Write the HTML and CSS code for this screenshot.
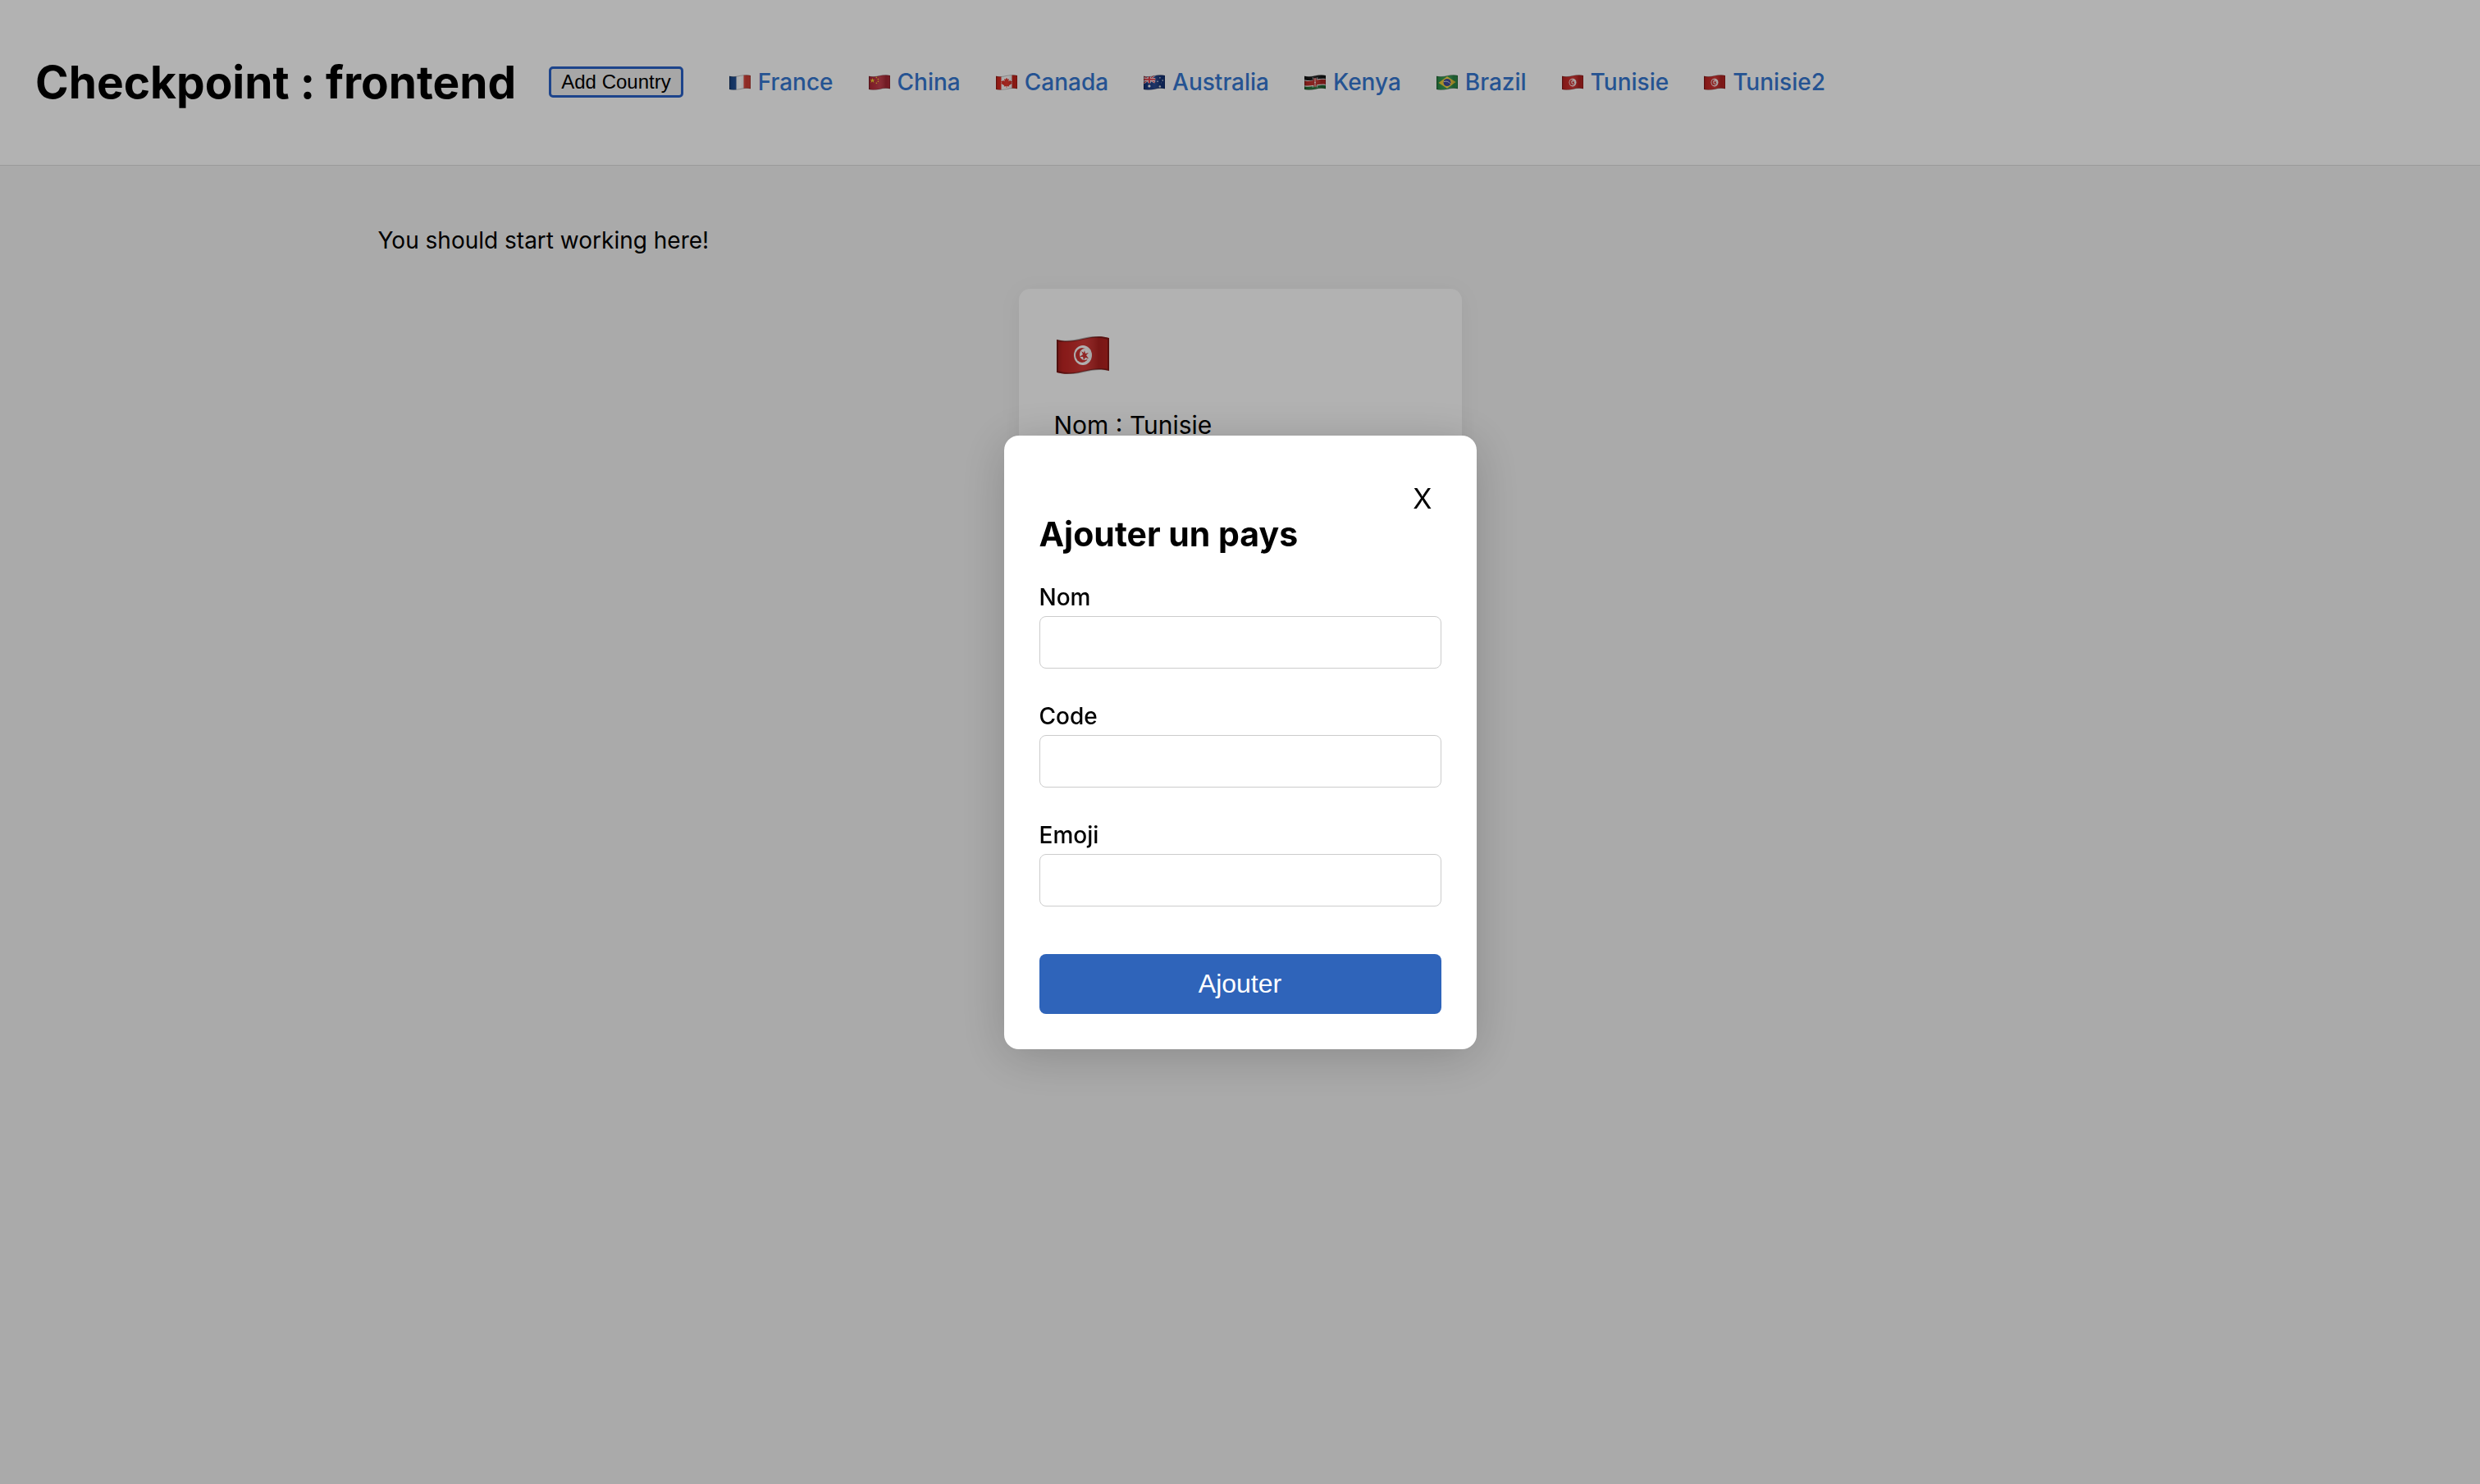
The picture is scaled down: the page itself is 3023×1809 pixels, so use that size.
FILE: index.html
```html
<!DOCTYPE html>
<html lang="fr">
<head>
<meta charset="utf-8">
<title>Checkpoint : frontend</title>
<link rel="stylesheet" href="styles.css">
</head>
<body>
<svg class="defs" aria-hidden="true">
  <defs>
    <clipPath id="wave"><path d="M0 4C10 7 20 6 32 3S54-1 64 2V42C54 39 44 40 32 43S10 47 0 44Z"/></clipPath>
    <linearGradient id="shade"><stop offset="0" stop-opacity=".22"/><stop offset=".12" stop-opacity=".06"/><stop offset=".5" stop-color="#fff" stop-opacity=".08"/><stop offset=".8" stop-opacity=".16"/><stop offset="1" stop-opacity=".1"/></linearGradient>
    <symbol id="cloth" viewBox="0 0 64 46"><path d="M0 4C10 7 20 6 32 3S54-1 64 2V42C54 39 44 40 32 43S10 47 0 44Z" fill="url(#shade)"/><path d="M1 5C10 7 20 6 32 3S54 0 63 3V41C54 39 44 40 32 43S10 46 1 43Z" fill="none" stroke="#000" stroke-opacity=".3" stroke-width="2"/></symbol>
    <symbol id="fr" viewBox="0 0 64 46"><g clip-path="url(#wave)"><path fill="#fff" d="M0 0h64v46H0z"/><path fill="#1f4f96" d="M0 0h21v46H0z"/><path fill="#ee4a40" d="M43 0h21v46H43z"/></g><use href="#cloth"/></symbol>
    <symbol id="cn" viewBox="0 0 64 46"><g clip-path="url(#wave)"><path fill="#c12f3e" d="M0 0h64v46H0z"/><path fill="#ffe030" d="m11 10 2 5h5l-4 3 2 6-5-4-5 4 2-6-4-3h5z"/><g fill="#ffd030"><circle cx="23" cy="8" r="2"/><circle cx="28" cy="13" r="2"/><circle cx="28" cy="20" r="2"/><circle cx="23" cy="25" r="2"/></g></g><use href="#cloth"/></symbol>
    <symbol id="ca" viewBox="0 0 64 46"><g clip-path="url(#wave)"><path fill="#fff" d="M0 0h64v46H0z"/><path fill="#e32a20" d="M0 0h16v46H0zM48 0h16v46H48zM32 8l3 6 4-2-1 8 5-4 1 3 4 0-2 5 2 2-9 6 1 3-7-1v5h-2v-5l-7 1 1-3-9-6 2-2-2-5 4 0 1-3 5 4-1-8 4 2z"/></g><use href="#cloth"/></symbol>
    <symbol id="au" viewBox="0 0 64 46"><g clip-path="url(#wave)"><path fill="#183b88" d="M0 0h64v46H0z"/><path stroke="#fff" stroke-width="6" d="M0 4l34 19M34 1 0 25"/><path stroke="#e63946" stroke-width="3" d="M0 4l34 19M34 1 0 25"/><path stroke="#fff" stroke-width="9" d="M17 0v25M0 14h35"/><path stroke="#e63946" stroke-width="5" d="M17 0v25M0 14h35"/><g fill="#fff"><circle cx="17" cy="34" r="4"/><circle cx="49" cy="9" r="2"/><circle cx="49" cy="35" r="3"/><circle cx="42" cy="20" r="2"/><circle cx="57" cy="17" r="2"/><circle cx="53" cy="24" r="1"/></g></g><use href="#cloth"/></symbol>
    <symbol id="ke" viewBox="0 0 64 46"><g clip-path="url(#wave)"><path fill="#fff" d="M0 0h64v46H0z"/><path fill="#151515" d="M0 0h64v12C48 9 36 14 24 16S6 17 0 15z"/><path fill="#c52d28" d="M0 18c8 2 18 1 28-1s24-4 36-3v15c-12-3-22 0-34 2S8 33 0 32z"/><path fill="#247337" d="M0 35c8 2 18 1 28-1s24-5 36-2v14H0z"/><path stroke="#fff" stroke-width="2" d="m25 8 14 30M39 8 25 38"/><ellipse cx="32" cy="23" rx="6" ry="14" fill="#bd2522"/><path stroke="#fff" stroke-width="2" d="M32 10v26M30 23h4"/></g><use href="#cloth"/></symbol>
    <symbol id="br" viewBox="0 0 64 46"><g clip-path="url(#wave)"><path fill="#319a50" d="M0 0h64v46H0z"/><path fill="#fbd438" d="m32 5 26 17-26 19L6 24z"/><circle cx="32" cy="23" r="11" fill="#303c96"/><path fill="none" stroke="#fff" stroke-width="2" d="M22 21c8-3 15 0 20 6"/></g><use href="#cloth"/></symbol>
    <symbol id="tn" viewBox="0 0 64 46"><g clip-path="url(#wave)"><path fill="#ce2826" d="M0 0h64v46H0z"/><ellipse cx="32" cy="23" rx="11" ry="12" fill="#fff"/><ellipse cx="31" cy="23" rx="8" ry="9" fill="#ce2826"/><ellipse cx="34" cy="22" rx="6" ry="7" fill="#fff"/><path fill="#ce2826" d="m34 17 1 4 4-1-3 3 3 4-4-1-2 3-1-4-4 0 4-3-2-4 3 2z"/></g><use href="#cloth"/></symbol>
  </defs>
</svg>

<header class="header">
  <h1 class="title">Checkpoint : frontend</h1>
  <button class="add" type="button">Add Country</button>
  <nav class="nav">
    <a href="#fr"><svg class="flag"><use href="#fr"/></svg>France</a>
    <a href="#cn"><svg class="flag"><use href="#cn"/></svg>China</a>
    <a href="#ca"><svg class="flag"><use href="#ca"/></svg>Canada</a>
    <a href="#au"><svg class="flag"><use href="#au"/></svg>Australia</a>
    <a href="#ke"><svg class="flag"><use href="#ke"/></svg>Kenya</a>
    <a href="#br"><svg class="flag"><use href="#br"/></svg>Brazil</a>
    <a href="#tn"><svg class="flag"><use href="#tn"/></svg>Tunisie</a>
    <a href="#tn"><svg class="flag"><use href="#tn"/></svg>Tunisie2</a>
  </nav>
</header>

<main class="main">
  <p class="intro">You should start working here!</p>
  <article class="card">
    <svg class="card-flag"><use href="#tn"/></svg>
    <p class="card-name">Nom : Tunisie</p>
  </article>
</main>

<div class="overlay">
  <form class="modal" role="dialog" aria-labelledby="modal-title">
    <button class="close" type="button">X</button>
    <h2 class="modal-title" id="modal-title">Ajouter un pays</h2>
    <div class="field"><label for="name">Nom</label><input id="name" type="text"></div>
    <div class="field"><label for="code">Code</label><input id="code" type="text"></div>
    <div class="field"><label for="emoji">Emoji</label><input id="emoji" type="text"></div>
    <button class="submit" type="submit">Ajouter</button>
  </form>
</div>
</body>
</html>
```
FILE: styles.css
```css
* { box-sizing: border-box; }

body {
  margin: 0;
  min-height: 100vh;
  background: #f4f4f4;
  color: #000;
  font: 28px/36px Inter, "Liberation Sans", sans-serif;
}

.defs { position: absolute; width: 0; height: 0; }

h1, h2, p { margin: 0; }

.header {
  display: flex;
  align-items: center;
  gap: 40px;
  padding: 64px 43px 65px;
  background: #fff;
  border-bottom: 1px solid #ddd;
}

.title { font-size: 55px; line-height: 72px; font-weight: 700; white-space: nowrap; }

.add {
  height: 38px;
  padding: 0 12px;
  border: 3px solid #2a62c8;
  border-radius: 5px;
  background: #efefef;
  color: #000;
  font: 24px/30px "Liberation Sans", Arial, sans-serif;
}

.nav { display: flex; gap: 43px; margin-left: 16px; }
.nav a {
  display: flex;
  align-items: center;
  gap: 9px;
  color: #3578d2;
  font-weight: 500;
  text-decoration: none;
}

.flag { width: 26px; height: 19px; }

.main { max-width: 2160px; margin: 0 auto; padding: 73px 29px; }

.card {
  width: 540px;
  margin: 41px auto 0;
  padding: 58px 43px 43px;
  border-radius: 14px;
  background: #fff;
  box-shadow: 0 4px 28px rgba(0, 0, 0, .06);
}

.card-flag { display: block; width: 64px; height: 46px; margin-left: 3px; }
.card-name { margin-top: 43px; font-size: 30px; line-height: 38px; }

.overlay {
  position: fixed;
  inset: 0;
  display: flex;
  align-items: center;
  justify-content: center;
  background: rgba(0, 0, 0, .3);
}

.modal {
  display: flex;
  flex-direction: column;
  width: 576px;
  padding: 57px 43px 43px;
  border-radius: 18px;
  background: #fff;
  box-shadow: 0 8px 58px rgba(0, 0, 0, .2);
}

.close {
  align-self: flex-end;
  padding: 0 11px;
  border: 0;
  background: none;
  color: #000;
  font: 34px/40px Inter, "Liberation Sans", sans-serif;
}

.modal-title { font-size: 41px; line-height: 46px; font-weight: 700; }

.field { display: flex; flex-direction: column; gap: 5px; margin-top: 40px; }
.field label { font-weight: 500; }
.field input {
  width: 100%;
  height: 64px;
  padding: 0 14px;
  border: 1px solid #ccc;
  border-radius: 8px;
  background: #fff;
  font: inherit;
}

.modal-title + .field { margin-top: 36px; }

.submit {
  height: 73px;
  margin-top: 58px;
  border: 0;
  border-radius: 8px;
  background: #2f64ba;
  color: #fff;
  font: 32px/36px "Liberation Sans", Arial, sans-serif;
}
```
